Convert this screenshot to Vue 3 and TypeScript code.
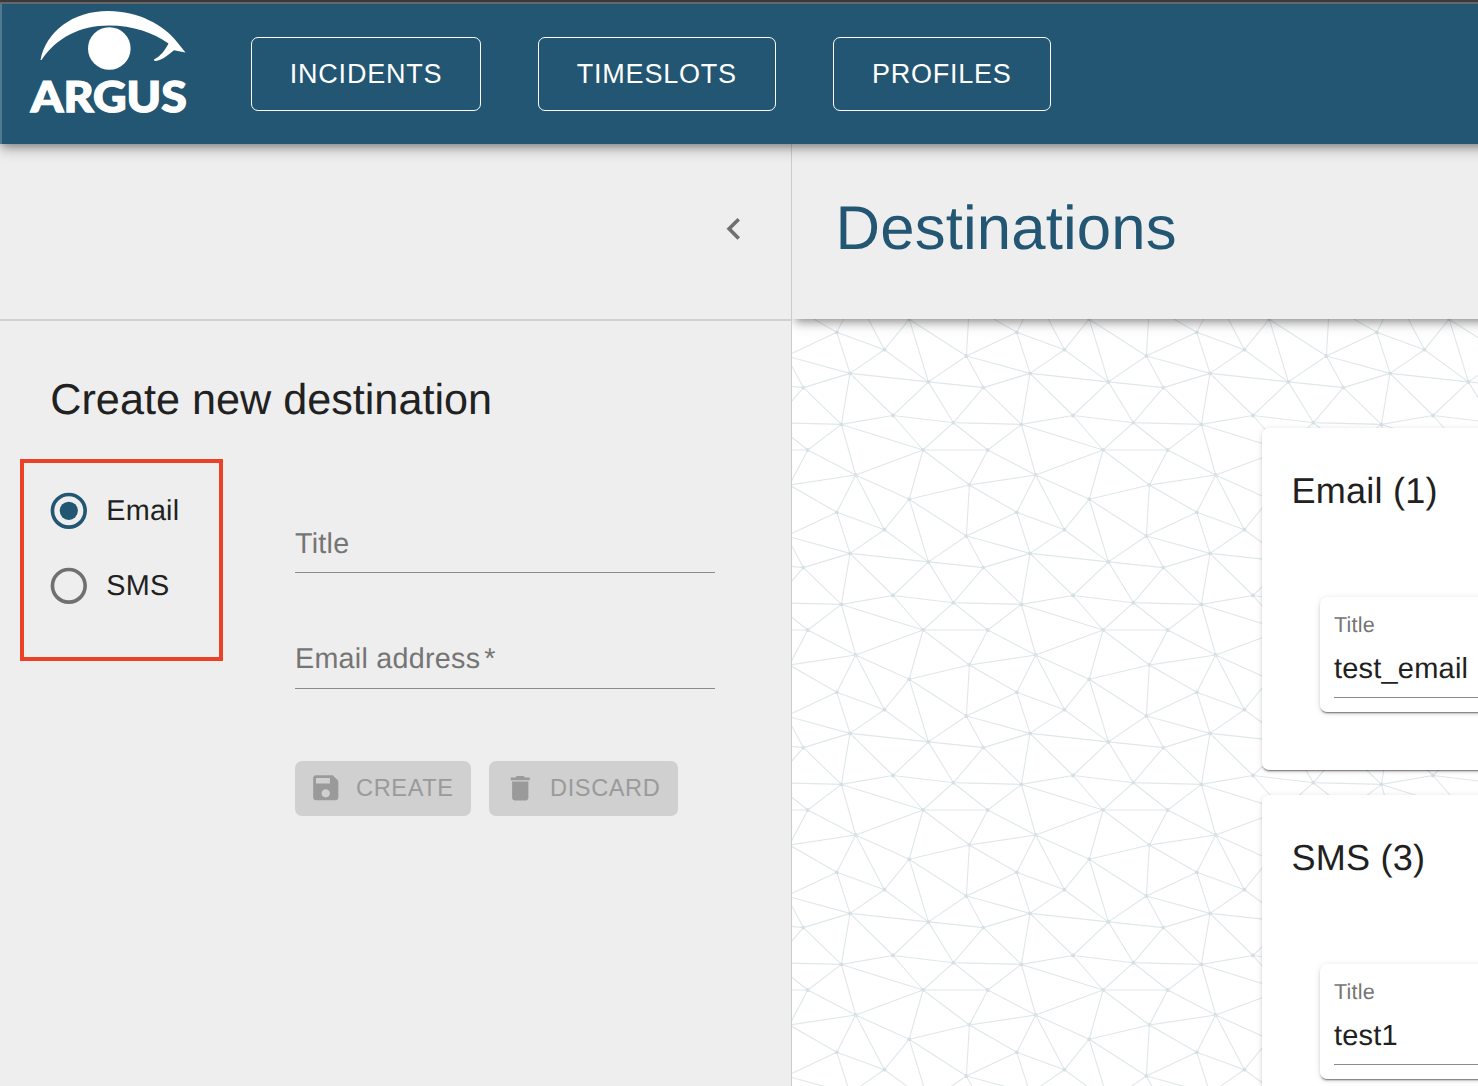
<script setup lang="ts">
import { ref } from 'vue'

type Point = [number, number]

const navItems = ['Incidents', 'Timeslots', 'Profiles']
const mediaTypes = ['Email', 'SMS']
const selected = ref('Email')

const groups = [
  { name: 'Email', count: 1, title: 'test_email' },
  { name: 'SMS', count: 3, title: 'test1' },
]

// Triangle mesh that repeats every 180px in both directions
const TILE = 180
const nodes: Record<string, Point> = {
  A: [44.8, 13.3], B: [92.4, 30.7], C: [117.2, 0.2], D: [174.4, 37],
  E: [58, 54.4], F: [136.4, 62.9], G: [191.4, 68.6], H: [101, 96.5],
  I: [49.4, 105.4], J: [161.4, 103.7], K: [195.8, 131], L: [131, 131],
  M: [63.7, 156], O: [177.4, 166],
}
// from, to, horizontal and vertical tile offset of the end node
const links: [string, string, number, number][] = [
  ['A', 'B', 0, 0], ['A', 'E', 0, 0], ['A', 'D', -1, 0], ['A', 'O', -1, -1], ['A', 'M', 0, -1],
  ['B', 'E', 0, 0], ['B', 'F', 0, 0], ['B', 'C', 0, 0], ['B', 'M', 0, -1],
  ['C', 'F', 0, 0], ['C', 'D', 0, 0], ['C', 'M', 0, -1], ['C', 'L', 0, -1], ['C', 'O', 0, -1],
  ['D', 'O', 0, -1], ['D', 'F', 0, 0], ['D', 'G', 0, 0], ['D', 'E', 1, 0],
  ['E', 'F', 0, 0], ['E', 'H', 0, 0], ['E', 'I', 0, 0], ['E', 'G', -1, 0],
  ['F', 'G', 0, 0], ['F', 'H', 0, 0], ['F', 'J', 0, 0], ['G', 'J', 0, 0], ['G', 'I', 1, 0],
  ['H', 'I', 0, 0], ['H', 'J', 0, 0], ['H', 'L', 0, 0], ['I', 'L', 0, 0], ['I', 'M', 0, 0],
  ['I', 'J', -1, 0], ['I', 'K', -1, 0], ['J', 'L', 0, 0], ['J', 'K', 0, 0],
  ['K', 'L', 0, 0], ['K', 'O', 0, 0], ['K', 'M', 1, 0], ['L', 'M', 0, 0], ['L', 'O', 0, 0],
  ['M', 'O', -1, 0],
]
const meshPath = links
  .map(([a, b, dx, dy]) => {
    const [x1, y1] = nodes[a]
    const [x2, y2] = nodes[b]
    return `M${x1} ${y1}L${x2 + dx * TILE} ${y2 + dy * TILE}`
  })
  .join('')
const shifts: Point[] = [-1, 0, 1].flatMap((x) => [-1, 0, 1].map((y): Point => [x * TILE, y * TILE]))
</script>

<template>
  <div class="app">
    <header class="topbar">
      <svg class="logo" viewBox="0 0 170 130" width="170" height="130" aria-label="Argus">
        <path
          d="M16.500 56C22 28 48 7 84.500 7C114 7 140 21 153 38L161.500 48.500L150 46.300C143 52 137 57.200 130.500 57L130 55.500C137 52 141 46 144.500 39.500C130 29 109 21.500 85 21.500C56 21.500 32 34 17.500 56Z"
          fill="#fff"
        />
        <circle cx="85.300" cy="44.500" r="21.300" fill="#fff" />
        <text x="6.800" y="107.700" textLength="156" lengthAdjust="spacingAndGlyphs">ARGUS</text>
      </svg>
      <nav class="nav">
        <button v-for="item in navItems" :key="item" class="nav-btn">{{ item }}</button>
      </nav>
    </header>

    <div class="body">
      <aside class="drawer">
        <div class="drawer-head">
          <svg class="chevron" viewBox="0 0 24 24" width="43.600" height="43.600">
            <path d="M15.410 7.410 14 6l-6 6 6 6 1.410-1.410L10.830 12z" fill="#707070" />
          </svg>
        </div>
        <h2 class="form-title">Create new destination</h2>
        <div class="form">
          <div class="media">
            <label v-for="m in mediaTypes" :key="m" class="media-option" @click="selected = m">
              <svg viewBox="0 0 24 24" width="43.600" height="43.600" :class="['radio', { on: selected === m }]">
                <circle cx="12" cy="12" r="9" fill="none" stroke="currentColor" stroke-width="2" />
                <circle v-if="selected === m" cx="12" cy="12" r="5" fill="currentColor" />
              </svg>
              <span>{{ m }}</span>
            </label>
          </div>
          <div class="fields">
            <div class="field">Title</div>
            <div class="field second">Email address<span class="star">*</span></div>
            <div class="actions">
              <button class="action create">
                <svg viewBox="0 0 24 24" width="33.500" height="33.500">
                  <path
                    d="M17 3H5c-1.110 0-2 .9-2 2v14c0 1.100.89 2 2 2h14c1.100 0 2-.9 2-2V7l-4-4zm-5 16c-1.660 0-3-1.340-3-3s1.340-3 3-3 3 1.340 3 3-1.340 3-3 3zm3-10H5V5h10v4z"
                    fill="currentColor"
                  />
                </svg>
                <span>Create</span>
              </button>
              <button class="action discard">
                <svg viewBox="0 0 24 24" width="32.500" height="32.500">
                  <path d="M6 19c0 1.100.9 2 2 2h8c1.100 0 2-.9 2-2V7H6v12zM19 4h-3.500l-1-1h-5l-1 1H5v2h14V4z" fill="currentColor" />
                </svg>
                <span>Discard</span>
              </button>
            </div>
          </div>
        </div>
      </aside>

      <main class="main">
        <div class="page-head"><h1>Destinations</h1></div>
        <div class="canvas">
          <svg class="mesh" width="686" height="767">
            <defs>
              <pattern id="mesh" :width="TILE" :height="TILE" patternUnits="userSpaceOnUse">
                <g v-for="([x, y], i) in shifts" :key="i" :transform="`translate(${x} ${y})`">
                  <path :d="meshPath" stroke="#dfe7ea" stroke-width="1.100" fill="none" />
                  <circle v-for="(p, k) in nodes" :key="k" :cx="p[0]" :cy="p[1]" r="1.900" fill="#d5dfe3" />
                </g>
              </pattern>
            </defs>
            <rect width="686" height="767" fill="url(#mesh)" />
          </svg>
          <div class="groups">
            <section v-for="g in groups" :key="g.name" class="card">
              <h3>{{ g.name }} ({{ g.count }})</h3>
              <div class="item">
                <div class="item-label">Title</div>
                <div class="item-value">{{ g.title }}</div>
              </div>
            </section>
          </div>
        </div>
      </main>
    </div>
  </div>
</template>

<style>
body {
  margin: 0;
  overflow: hidden;
}
</style>

<style scoped>
.app {
  width: 1478px;
  height: 1086px;
  overflow: hidden;
  display: flex;
  flex-direction: column;
  background: #eee;
  color: #212121;
  font-family: 'Liberation Sans', Arial, sans-serif;
  text-rendering: geometricPrecision;
}
h1, h2, h3 {
  margin: 0;
  font-weight: 400;
}
button {
  font-family: inherit;
  text-transform: uppercase;
  white-space: nowrap;
  margin: 0;
}
.topbar {
  position: relative;
  z-index: 2;
  box-sizing: border-box;
  height: 144px;
  margin-right: -30px;
  flex: none;
  display: flex;
  align-items: flex-start;
  background: #235672;
  border-top: 2px solid #39383a;
  box-shadow: inset 0 2px #666769, inset 2px 0 #517990, 0 4px 8px -2px rgba(0, 0, 0, 0.3), 0 5px 14px rgba(0, 0, 0, 0.17), 0 2px 16px rgba(0, 0, 0, 0.12);
}
.logo {
  margin: 2px 0 0 24px;
  flex: none;
}
.logo text {
  font-family: Lato, sans-serif;
  font-weight: 900;
  font-size: 42.500px;
  fill: #fff;
  stroke: #fff;
  stroke-width: 1.3px;
}
.nav {
  display: flex;
  gap: 57px;
  margin: 35px 0 0 57px;
}
.nav-btn {
  box-sizing: border-box;
  height: 74px;
  padding: 0 37.8px;
  border: 1px solid #fff;
  border-radius: 7px;
  background: none;
  color: #fff;
  font-size: 27px;
  letter-spacing: 0.77px;
}
.nav-btn:last-child {
  padding: 0 38.300px;
}
.body {
  flex: 1;
  display: flex;
  min-height: 0;
}
.drawer {
  box-sizing: border-box;
  width: 792px;
  flex: none;
  border-right: 1px solid #ccc;
}
.drawer-head {
  box-sizing: border-box;
  height: 177px;
  padding-right: 35.400px;
  border-bottom: 2px solid #d0d0d0;
  display: flex;
  justify-content: flex-end;
  align-items: center;
}
.chevron {
  margin-top: -5px;
}
.form-title {
  margin: 53px 0 0 50.300px;
  height: 52px;
  font-size: 43.200px;
  line-height: 52px;
}
.form {
  display: flex;
  align-items: flex-start;
  margin: 33px 0 0 20px;
}
.media {
  box-sizing: border-box;
  width: 203px;
  height: 202px;
  padding: 10px 0 0 22.500px;
  border: 4px solid #ed4127;
}
.media-option {
  height: 75.500px;
  display: flex;
  align-items: center;
  gap: 16.200px;
  font-size: 28.800px;
  letter-spacing: 0.2px;
}
.media-option:first-child span {
  padding-top: 1px;
}
.radio {
  color: #707070;
}
.radio.on {
  color: #235672;
}
.fields {
  margin-left: 72px;
}
.field {
  box-sizing: border-box;
  width: 420px;
  height: 60px;
  margin-top: 54px;
  border-bottom: 1px solid #8b8b8b;
  font-size: 28.700px;
  letter-spacing: 0.27px;
  line-height: 62px;
  color: #757575;
}
.field.second {
  margin-top: 56px;
  line-height: 60px;
}
.star {
  margin-left: 4px;
}
.actions {
  display: flex;
  gap: 18px;
  margin-top: 72px;
}
.action {
  box-sizing: border-box;
  height: 55px;
  padding: 0 0 0 13.600px;
  border: 0;
  border-radius: 7px;
  display: flex;
  align-items: center;
  background: #d0d0d0;
  color: #9a9a9a;
  font-size: 23.600px;
  letter-spacing: 0.6px;
}
.create {
  width: 176px;
}
.create span {
  margin-left: 14px;
}
.discard {
  width: 189px;
  padding-left: 14.500px;
}
.discard span {
  margin-left: 14px;
}
.action svg {
  margin-top: -1px;
}
.main {
  flex: 1;
  display: flex;
  flex-direction: column;
  min-width: 0;
}
.page-head {
  position: relative;
  z-index: 1;
  flex: none;
  height: 175px;
  margin-right: -30px;
  background: #eee;
  box-shadow: 2px 4px 8px -2px rgba(0, 0, 0, 0.3), 2px 5px 12px rgba(0, 0, 0, 0.2);
  clip-path: inset(0 0 -30px 0);
}
.page-head h1 {
  padding: 49px 0 0 43.500px;
  font-size: 61.700px;
  line-height: 72px;
  letter-spacing: 0.15px;
  color: #235672;
}
.canvas {
  flex: 1;
  min-height: 0;
  display: grid;
  background: #fff;
}
.mesh,
.groups {
  grid-area: 1 / 1;
}
.groups {
  padding: 109px 0 0 470px;
  display: flex;
  flex-direction: column;
  gap: 25px;
}
.card {
  box-sizing: border-box;
  height: 342px;
  width: 400px;
  flex: none;
  padding: 40px 0 0 58px;
  border-radius: 7px;
  background: #fff;
  box-shadow: 0 2px 1px -1px rgba(0, 0, 0, 0.35), 0 2px 2px rgba(0, 0, 0, 0.16), 0 1px 6px rgba(0, 0, 0, 0.12);
}
.card h3 {
  margin-left: -28.500px;
  font-size: 36.100px;
  line-height: 46px;
  letter-spacing: 0.2px;
}
.item {
  box-sizing: border-box;
  height: 115px;
  margin-top: 83px;
  padding: 14px;
  border-radius: 7px;
  background: #fff;
  box-shadow: 0 2px 1px -1px rgba(0, 0, 0, 0.35), 0 2px 2px rgba(0, 0, 0, 0.16), 0 1px 6px rgba(0, 0, 0, 0.12);
}
.item-label {
  font-size: 21.600px;
  line-height: 28px;
  letter-spacing: 0.2px;
  color: #757575;
}
.item-value {
  box-sizing: border-box;
  height: 59px;
  font-size: 29px;
  line-height: 60px;
  letter-spacing: 0.2px;
  border-bottom: 1px solid #8b8b8b;
}
</style>
